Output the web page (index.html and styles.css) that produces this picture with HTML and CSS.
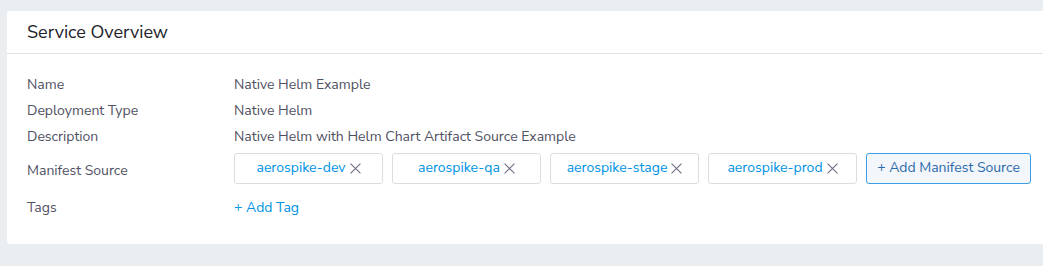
FILE: index.html
```html
<!DOCTYPE html>
<html lang="en">
<head>
    <meta charset="UTF-8">
    <meta name="viewport" content="width=device-width, initial-scale=1.0">
    <title>Service Overview</title>
    <link rel="stylesheet" href="styles.css">
</head>
<body>
    <div class="card">
        <div class="card-header">Service Overview</div>

        <div class="card-body">
            <div class="row">
                <div class="label">Name</div>
                <div class="value">Native Helm Example</div>
            </div>
            <div class="row">
                <div class="label">Deployment Type</div>
                <div class="value">Native Helm</div>
            </div>
            <div class="row">
                <div class="label">Description</div>
                <div class="value">Native Helm with Helm Chart Artifact Source Example</div>
            </div>
            <div class="row row-sources">
                <div class="label label-low">Manifest Source</div>
                <div class="value sources">
                    <span class="chip">aerospike-dev <svg class="close" viewBox="0 0 10 10"><path d="M0.5 0.5L9.5 9.5M9.5 0.5L0.5 9.5"/></svg></span>
                    <span class="chip">aerospike-qa <svg class="close" viewBox="0 0 10 10"><path d="M0.5 0.5L9.5 9.5M9.5 0.5L0.5 9.5"/></svg></span>
                    <span class="chip">aerospike-stage <svg class="close" viewBox="0 0 10 10"><path d="M0.5 0.5L9.5 9.5M9.5 0.5L0.5 9.5"/></svg></span>
                    <span class="chip">aerospike-prod <svg class="close" viewBox="0 0 10 10"><path d="M0.5 0.5L9.5 9.5M9.5 0.5L0.5 9.5"/></svg></span>
                    <button class="add-source">+ Add Manifest Source</button>
                </div>
            </div>
            <div class="row row-tags">
                <div class="label">Tags</div>
                <div class="value"><a class="add-tag">+ Add Tag</a></div>
            </div>
        </div>
    </div>
</body>
</html>
```

FILE: styles.css
```css
body {
    margin: 0;
    background-color: #eaeef1;
    font-family: "Nunito Sans", Lato, "Open Sans", sans-serif;
    height: 266px;
    overflow: hidden;
}
.card {
    margin: 11px 0 0 7px;
    background-color: #fff;
    border-radius: 3px 0 0 3px;
    height: 233px;
}
.card-header {
    height: 42px;
    line-height: 42px;
    padding-left: 20px;
    font-size: 18px;
    color: #22222a;
    border-bottom: 1px solid #dfe0e5;
}
.card-body {
    padding: 17px 0 0 20px;
}
.row {
    display: flex;
    align-items: center;
    height: 26px;
    font-size: 14px;
}
.label {
    width: 207px;
    color: #4f5162;
}
.label-low {
    padding-top: 5px;
}
.value {
    color: #4f5162;
}
.row-sources {
    height: 32px;
    margin: 3px 0 10px;
}
.sources {
    display: flex;
    gap: 9px;
}
.chip {
    box-sizing: border-box;
    width: 149px;
    height: 31px;
    border: 1px solid #dcdde1;
    border-radius: 3px;
    display: flex;
    align-items: center;
    justify-content: center;
    color: #0092e4;
    font-size: 14px;
    padding-bottom: 2px;
}
.close {
    width: 11px;
    height: 11px;
    margin-left: 4px;
    margin-top: 2px;
    stroke: #6b6d85;
    stroke-width: 1;
    fill: none;
}
.add-source {
    box-sizing: border-box;
    width: 165px;
    height: 31px;
    border: 1px solid #3d9ee6;
    border-radius: 3px;
    background-color: #f3f6fa;
    color: #2b6aad;
    font-family: inherit;
    font-size: 14px;
    padding: 0 0 2px;
}
.add-tag {
    color: #0092e4;
    cursor: pointer;
}
```
